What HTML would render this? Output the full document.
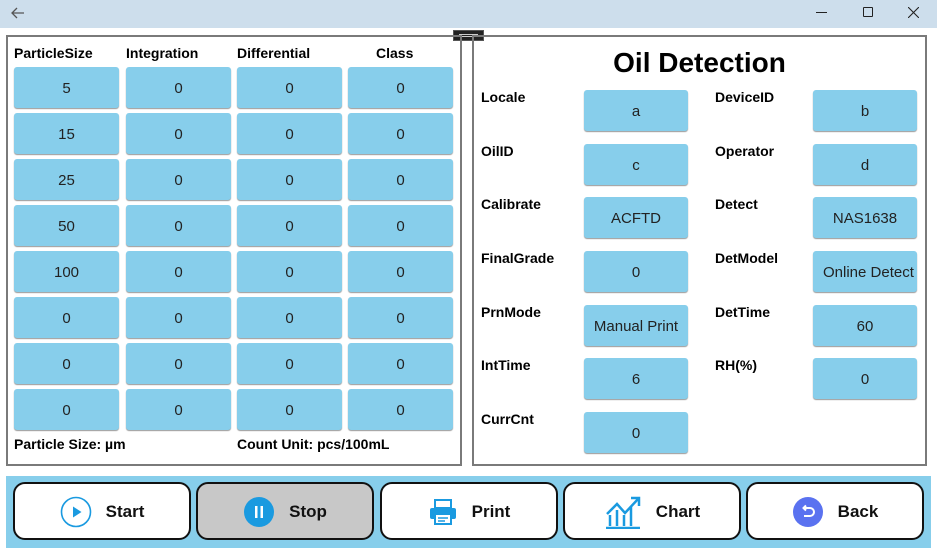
<!DOCTYPE html><html><head><style>
*{margin:0;padding:0;box-sizing:border-box}
body{width:937px;height:548px;background:#fff;font-family:"Liberation Sans",sans-serif;position:relative;overflow:hidden}
.a{position:absolute}
.tb{left:0;top:0;width:937px;height:28px;background:#cddeec}
.panel{border:2px solid #7a7a7a}
.c{position:absolute;background:#87ceeb;border-radius:3px;box-shadow:0 1px 1px #999;font-size:15px;color:#222;display:flex;align-items:center;justify-content:center;white-space:nowrap;overflow:hidden;padding-top:2px}
.h{position:absolute;font-size:14px;font-weight:bold;color:#000}
.btn{position:absolute;top:482px;height:58px;border:2px solid #111;border-radius:12px;background:#fff;display:flex;align-items:center;justify-content:center;font-size:17px;font-weight:bold;color:#111;gap:14px;padding-top:2px}
</style></head><body>
<div class="a tb"></div>
<svg class="a" style="left:10px;top:5px" width="16" height="16"><path d="M14 8H2M7 3L2 8l5 5" stroke="#555" stroke-width="1.3" fill="none"/></svg>
<div class="a" style="left:816px;top:12px;width:11px;height:1px;background:#222"></div>
<div class="a" style="left:863px;top:7px;width:10px;height:10px;border:1px solid #222;border-radius:1px"></div>
<svg class="a" style="left:908px;top:7px" width="11" height="11"><path d="M0 0L11 11M11 0L0 11" stroke="#222" stroke-width="1.1"/></svg>
<div class="a" style="left:453px;top:30px;width:31px;height:11px;background:#222;border:1px solid #555"><div style="margin:3px 5px;height:3px;border-top:1px solid #ccc;border-bottom:1px solid #ccc"></div></div>
<div class="a panel" style="left:6px;top:35px;width:456px;height:431px"></div>
<div class="a panel" style="left:472px;top:35px;width:455px;height:431px"></div>
<div class="h" style="left:14px;top:45px">ParticleSize</div>
<div class="h" style="left:126px;top:45px">Integration</div>
<div class="h" style="left:237px;top:45px">Differential</div>
<div class="h" style="left:376px;top:45px">Class</div>
<div id="g"></div>
<div class="h" style="left:14px;top:436px">Particle Size: µm</div>
<div class="h" style="left:237px;top:436px">Count Unit: pcs/100mL</div>
<div class="a" style="left:473px;top:47px;width:453px;text-align:center;font-size:28px;font-weight:bold">Oil Detection</div>
<div id="r"></div>
<div class="a" style="left:6px;top:476px;width:925px;height:72px;background:#87ceeb"></div>
<div class="btn" style="left:13px;width:178px"><svg width="32" height="32"><circle cx="16" cy="16" r="14.5" stroke="#1a9ae0" stroke-width="1.6" fill="none"/><path d="M13 10.5L21.5 16 13 21.5z" fill="#1a9ae0"/></svg>Start</div>
<div class="btn" style="left:196px;width:178px;background:#c8c8c8"><svg width="32" height="32"><circle cx="16" cy="16" r="15" fill="#1a9ae0"/><rect x="12" y="10" width="2.5" height="12" fill="#fff"/><rect x="17.5" y="10" width="2.5" height="12" fill="#fff"/></svg>Stop</div>
<div class="btn" style="left:380px;width:178px"><svg width="30" height="28"><rect x="7" y="2" width="16" height="8" fill="none" stroke="#1a9ae0" stroke-width="2"/><rect x="2" y="10" width="26" height="11" rx="2" fill="#1a9ae0"/><rect x="7" y="16" width="16" height="10" fill="#fff" stroke="#1a9ae0" stroke-width="2"/><path d="M10 20h10M10 23h7" stroke="#1a9ae0" stroke-width="1.5"/></svg>Print</div>
<div class="btn" style="left:563px;width:178px"><svg width="38" height="34"><path d="M2 33h34M6 31V20M13 31V15M20 31V20M27 31V12M3 19l10-10 8 9 13-14" stroke="#1a9ae0" stroke-width="2.5" fill="none"/><path d="M27 3h8v8" stroke="#1a9ae0" stroke-width="2.5" fill="none"/></svg>Chart</div>
<div class="btn" style="left:746px;width:178px"><svg width="32" height="32"><circle cx="16" cy="16" r="15" fill="#5a72f0"/><path d="M12 12h6a4 4 0 010 8h-6M14 9.5L11.5 12 14 14.5" stroke="#fff" stroke-width="2" fill="none"/></svg>Back</div>
<script>
var g='',xs=[14,126,237,348],ps=['5','15','25','50','100','0','0','0'];
for(var i=0;i<8;i++)for(var j=0;j<4;j++)g+='<div class="c" style="left:'+xs[j]+'px;top:'+(67+i*46)+'px;width:105px;height:41px">'+(j?'0':ps[i])+'</div>';
document.getElementById('g').outerHTML=g;
var r='',L=[['Locale','a','DeviceID','b'],['OilID','c','Operator','d'],['Calibrate','ACFTD','Detect','NAS1638'],['FinalGrade','0','DetModel','Online Detect'],['PrnMode','Manual Print','DetTime','60'],['IntTime','6','RH(%)','0'],['CurrCnt','0']];
var ys=[90,144,197,251,305,358,412];
L.forEach(function(l,i){var y=ys[i];
r+='<div class="h" style="left:481px;top:'+(y-1)+'px">'+l[0]+'</div><div class="c" style="left:584px;top:'+y+'px;width:104px;height:41px">'+l[1]+'</div>';
if(l[2])r+='<div class="h" style="left:715px;top:'+(y-1)+'px">'+l[2]+'</div><div class="c" style="left:813px;top:'+y+'px;width:104px;height:41px;'+(l[3].length>10?'justify-content:flex-start;padding-left:10px':'')+'">'+l[3]+'</div>';});
document.getElementById('r').outerHTML=r;
</script>
</body></html>
